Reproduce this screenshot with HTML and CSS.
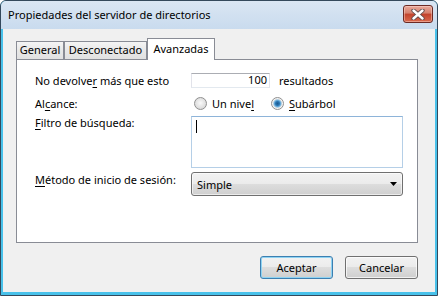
FILE: index.html
```html
<!DOCTYPE html>
<html lang="es">
<head>
    <meta charset="UTF-8">
    <title>Propiedades del servidor de directorios</title>
    <link rel="stylesheet" href="styles.css">
</head>
<body>
    <div class="window">
        <div class="titlebar">
            <span class="title">Propiedades del servidor de directorios</span>
            <button class="close-btn" title="Cerrar">
                <svg width="14" height="11" viewBox="0 0 14 11">
                    <path d="M2.5 1.5 L11.5 9.5 M11.5 1.5 L2.5 9.5" stroke="#5b4a4a" stroke-width="4.2" stroke-linecap="round"/>
                    <path d="M2.5 1.5 L11.5 9.5 M11.5 1.5 L2.5 9.5" stroke="#fff" stroke-width="2.4" stroke-linecap="round"/>
                </svg>
            </button>
        </div>

        <div class="client">
            <div class="tabs">
                <div class="tab tab-general">General</div>
                <div class="tab tab-offline">Desconectado</div>
                <div class="tab tab-advanced active">Avanzadas</div>
            </div>

            <div class="panel">
                <div class="row row-max">
                    <span class="field-label">No devolve<u>r</u> más que esto</span>
                    <div class="num-input">100</div>
                    <span class="suffix">resultados</span>
                </div>

                <div class="row row-scope">
                    <span class="field-label">Al<u>c</u>ance:</span>
                    <label class="radio radio-first"><span class="radio-dot"></span>Un nive<u>l</u></label>
                    <label class="radio"><span class="radio-dot checked"></span><u>S</u>ubárbol</label>
                </div>

                <div class="row row-filter">
                    <span class="field-label top"><u>F</u>iltro de búsqueda:</span>
                    <div class="textarea"><span class="caret"></span></div>
                </div>

                <div class="row row-method">
                    <span class="field-label top"><u>M</u>étodo de inicio de sesión:</span>
                    <div class="select">
                        <span>Simple</span>
                        <svg class="arrow" width="7" height="4" viewBox="0 0 7 4"><polygon points="0,0 7,0 3.5,4" fill="#000"/></svg>
                    </div>
                </div>
            </div>

            <div class="buttons">
                <button class="btn btn-default">Aceptar</button>
                <button class="btn">Cancelar</button>
            </div>
        </div>
    </div>
</body>
</html>
```

FILE: styles.css
```css
html, body {
    margin: 0;
    padding: 0;
}
body {
    width: 438px;
    height: 296px;
    overflow: hidden;
    font-family: "Noto Sans", "Open Sans", sans-serif;
    font-size: 11px;
    line-height: 15px;
    color: #000;
    background-color: #fff;
}
.window {
    width: 438px;
    height: 296px;
    box-sizing: border-box;
    border: 1px solid #34495c;
    border-radius: 6px 6px 0 0;
    background-color: #48c1ea;
    display: flex;
    flex-direction: column;
    overflow: hidden;
}
.titlebar {
    height: 28px;
    flex-shrink: 0;
    display: flex;
    align-items: flex-start;
    justify-content: space-between;
    padding: 0 4px 0 7px;
    background: linear-gradient(#dae6f3, #c9dbee);
}
.title {
    line-height: 28px;
    white-space: nowrap;
}
.close-btn {
    margin-top: 4px;
    width: 30px;
    height: 18px;
    padding: 0;
    border: 1px solid #6b2a24;
    border-radius: 3px;
    background: linear-gradient(#e9a99b, #d47f6c 45%, #c2432c 50%, #d9694d);
    box-shadow: inset 0 0 0 1px rgba(255, 220, 210, 0.45);
    display: flex;
    align-items: center;
    justify-content: center;
}
.client {
    flex: 1;
    margin: 0 2px 3px;
    background-color: #f0f0f0;
    display: flex;
    flex-direction: column;
}
.tabs {
    display: flex;
    align-items: flex-end;
    height: 21px;
    margin: 9px 0 0 13px;
}
.tab {
    height: 18px;
    box-sizing: border-box;
    border: 1px solid #898c95;
    border-bottom: none;
    background: linear-gradient(#f4f4f4, #e8e8e8 50%, #e1e1e1);
    text-align: center;
    line-height: 16px;
    white-space: nowrap;
}
.tab-general {
    width: 48px;
}
.tab-offline {
    width: 83px;
}
.tab-advanced {
    width: 68px;
}
.tab.active {
    height: 22px;
    margin-bottom: -1px;
    background: #fff;
    line-height: 19px;
    position: relative;
    z-index: 1;
}
.panel {
    height: 184px;
    box-sizing: border-box;
    margin: 0 17px 0 13px;
    padding: 13px 0 0 18px;
    border: 1px solid #898c95;
    background-color: #fff;
}
.row {
    display: flex;
    align-items: center;
}
.field-label {
    width: 156px;
    flex-shrink: 0;
    white-space: nowrap;
}
.field-label.top {
    align-self: flex-start;
}
u {
    text-underline-offset: 2px;
}
.row-max {
    height: 15px;
}
.num-input {
    width: 79px;
    height: 15px;
    box-sizing: border-box;
    border: 1px solid #e2e3ea;
    border-top-color: #abadb3;
    border-bottom-color: #e3e9ef;
    padding-right: 2px;
    text-align: right;
    line-height: 12px;
    overflow: visible;
}
.suffix {
    margin-left: 9px;
}
.row-scope {
    height: 16px;
    margin-top: 7px;
}
.radio {
    display: flex;
    align-items: center;
    white-space: nowrap;
}
.radio-first {
    width: 77px;
    margin-left: 3px;
}
.radio-dot {
    width: 13px;
    height: 13px;
    box-sizing: border-box;
    margin-right: 5px;
    border: 1px solid #8f8f8f;
    border-radius: 50%;
    background: radial-gradient(circle at 50% 45%, #fafafa 0, #e4e4e4 50%, #cfcfcf 100%);
    flex-shrink: 0;
}
.radio-dot.checked {
    background: radial-gradient(circle at 50% 50%, #1b5a8f 0, #2b76b3 2px, #7cbbe4 3.5px, #e2e2e2 4.5px, #f3f3f3 5px);
}
.row-filter {
    margin-top: 5px;
}
.row-filter .field-label {
    margin-top: -1px;
}
.textarea {
    width: 212px;
    height: 52px;
    box-sizing: border-box;
    border: 1px solid #b5cfe7;
    border-top-color: #8eb4d9;
    padding: 3px 0 0 4px;
}
.caret {
    display: block;
    width: 1px;
    height: 13px;
    background-color: #000;
}
.row-method {
    margin-top: 4px;
}
.select {
    width: 212px;
    height: 24px;
    box-sizing: border-box;
    border: 1px solid #707070;
    border-radius: 3px;
    padding: 0 5px 0 5px;
    display: flex;
    align-items: center;
    justify-content: space-between;
    background: linear-gradient(#f2f2f2, #ebebeb 50%, #dddddd 50%, #cfcfcf);
    box-shadow: inset 0 0 0 1px rgba(255, 255, 255, 0.6);
}
.buttons {
    display: flex;
    justify-content: flex-end;
    gap: 12px;
    margin: 13px 17px 0 0;
}
.btn {
    width: 73px;
    height: 23px;
    padding: 0;
    border: 1px solid #707070;
    border-radius: 3px;
    font-family: inherit;
    font-size: 11px;
    color: #000;
    background: linear-gradient(#f2f2f2, #ebebeb 50%, #dddddd 50%, #cfcfcf);
    box-shadow: inset 0 0 0 1px rgba(255, 255, 255, 0.7);
}
.btn-default {
    border-color: #3c7fb1;
    box-shadow: inset 0 0 0 1px #8fd3f2;
}
```
